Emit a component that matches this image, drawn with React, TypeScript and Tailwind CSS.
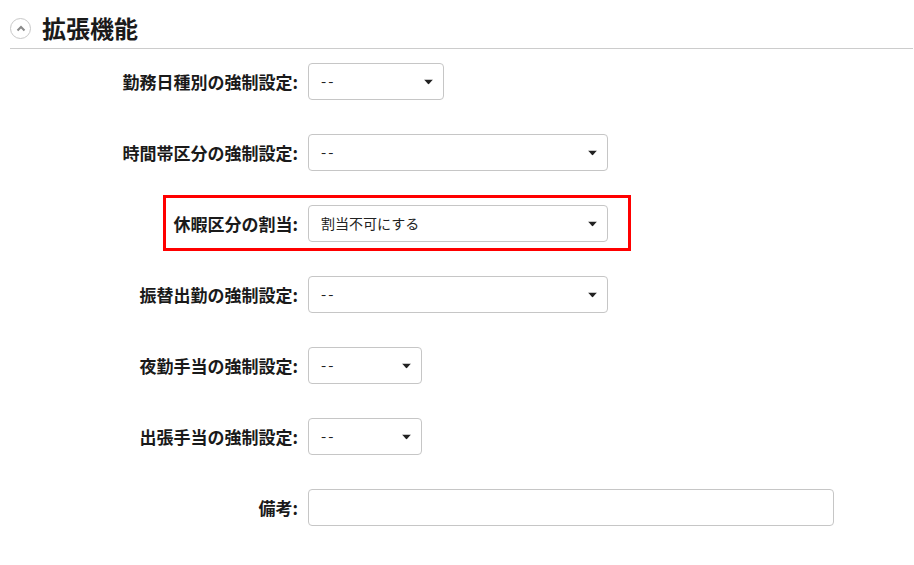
import React from "react";

const font = "font-['Noto_Sans_CJK_JP','Noto_Sans',sans-serif]";

type Field = {
  label: string;
  value?: string;
  width: string;
  kind: "select" | "input";
  highlight?: boolean;
};

const fields: Field[] = [
  { label: "勤務日種別の強制設定:", value: "--", width: "w-[136px]", kind: "select" },
  { label: "時間帯区分の強制設定:", value: "--", width: "w-[300px]", kind: "select" },
  { label: "休暇区分の割当:", value: "割当不可にする", width: "w-[300px]", kind: "select", highlight: true },
  { label: "振替出勤の強制設定:", value: "--", width: "w-[300px]", kind: "select" },
  { label: "夜勤手当の強制設定:", value: "--", width: "w-[114px]", kind: "select" },
  { label: "出張手当の強制設定:", value: "--", width: "w-[114px]", kind: "select" },
  { label: "備考:", width: "w-[526px]", kind: "input" },
];

const Caret = () => (
  <svg
    className="pointer-events-none absolute right-[11px] top-1/2 -translate-y-1/2"
    width="9"
    height="5"
    viewBox="0 0 9 5"
  >
    <path d="M0 0 L9 0 L4.5 5 Z" fill="#222" />
  </svg>
);

const FieldRow = ({ field }: { field: Field }) => (
  <div className="relative flex items-center h-[37px]">
    {field.highlight && (
      <div className="absolute left-[153px] top-[-10px] w-[468px] h-[56px] border-[3px] border-[#ff0000]" />
    )}
    <label className="w-[288px] text-right text-[17px] font-bold text-[#1a1a1a] leading-none whitespace-nowrap">
      {field.label}
    </label>
    <div className={`relative ml-[10px] h-[37px] ${field.width}`}>
      {field.kind === "select" ? (
        <>
          <select
            defaultValue={field.value}
            className={`appearance-none w-full h-full rounded-[4px] border border-[#c6c6c6] bg-white pl-[12px] pr-[28px] text-[14px] text-[#222] outline-none ${
              field.value === "--" ? "tracking-[2px] text-[15px]" : ""
            }`}
          >
            <option>{field.value}</option>
          </select>
          <Caret />
        </>
      ) : (
        <input
          type="text"
          className="w-full h-full rounded-[4px] border border-[#c6c6c6] bg-white px-[12px] text-[14px] text-[#222] outline-none"
        />
      )}
    </div>
  </div>
);

export default function App() {
  return (
    <div className={`w-[914px] h-[565px] bg-white overflow-hidden ${font}`}>
      <div className="ml-[10px] mr-[1px]">
        {/* Section header */}
        <div className="h-[49px] pt-[8px] border-b border-[#cccccc]">
          <div className="flex items-center h-[40px]">
            <div className="w-[21px] h-[21px] rounded-full border border-[#c8c8c8] bg-white flex items-center justify-center">
              <svg width="10" height="7" viewBox="0 0 10 7">
                <path d="M1.5 5.5 L5 2 L8.5 5.5" fill="none" stroke="#8a8a8a" strokeWidth="2" />
              </svg>
            </div>
            <h2 className="ml-[11px] text-[24px] font-bold text-[#1a1a1a] leading-none">拡張機能</h2>
          </div>
        </div>

        {/* Fields */}
        <div className="mt-[14px] flex flex-col gap-[34px]">
          {fields.map((f) => (
            <FieldRow key={f.label} field={f} />
          ))}
        </div>
      </div>
    </div>
  );
}
